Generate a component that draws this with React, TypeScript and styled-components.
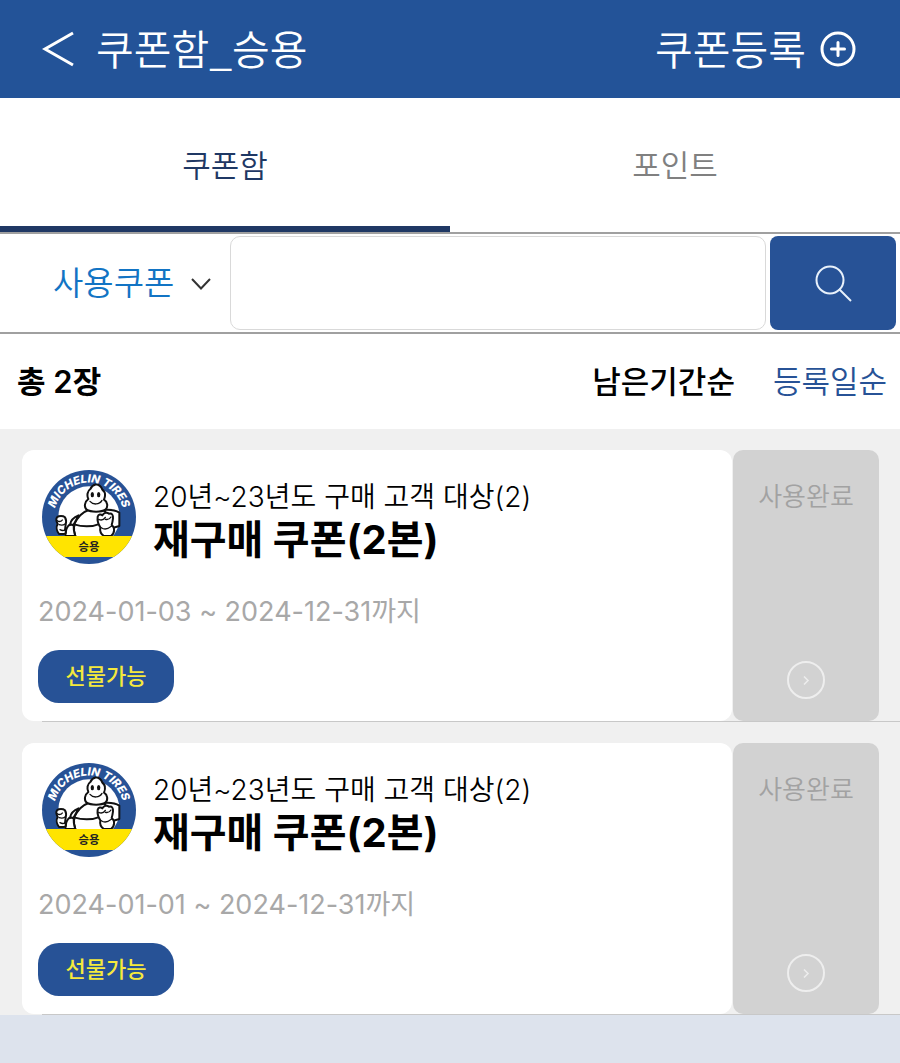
import React from "react";
import styled, { createGlobalStyle } from "styled-components";

const blue = "#275296";

const GlobalStyle = createGlobalStyle`
  *, *::before, *::after { box-sizing: border-box; }
  html, body, #root { min-height: 100vh; }
  body {
    margin: 0;
    background: #dde3ed;
    font-family: Inter, "Noto Sans CJK KR", sans-serif;
    color: #000;
  }
  button, input, select { font: inherit; color: inherit; }
  button { border: 0; padding: 0; background: none; cursor: pointer; }
  h1, h2, p, ul { margin: 0; padding: 0; }
`;

const Page = styled.div`
  background: #fff;
`;

const Header = styled.header`
  display: flex;
  align-items: center;
  justify-content: space-between;
  height: 98px;
  padding: 0 44px 0 42px;
  background: #235398;
  color: #fff;
  font-family: "Noto Sans CJK KR", sans-serif;
  font-size: 41px;
  font-weight: 350;
  line-height: 60px;
`;

const HeaderGroup = styled.div`
  display: flex;
  align-items: center;
  gap: 21px;
`;

const IconButton = styled.button`
  display: flex;
`;

const Title = styled.h1`
  padding-bottom: 4px;
  font: inherit;
`;

const RegisterButton = styled.button`
  display: flex;
  align-items: center;
  gap: 14px;
  span { padding-bottom: 4px; }
`;

const Tabs = styled.div`
  display: grid;
  grid-template-columns: 1fr 1fr;
  height: 136px;
  border-bottom: 2px solid #a0a0a0;
`;

const Tab = styled.button<{ $active?: boolean }>`
  padding-top: 2px;
  border-bottom: 6px solid ${(p) => (p.$active ? "#1f3864" : "transparent")};
  color: ${(p) => (p.$active ? "#1f3864" : "#808080")};
  font-size: 31px;
  font-weight: 350;
`;

const SearchBar = styled.form`
  display: flex;
  gap: 4px;
  height: 100px;
  padding: 2px 4px;
  border-bottom: 2px solid #a0a0a0;
`;

const FilterWrap = styled.div`
  position: relative;
  width: 222px;
  svg {
    position: absolute;
    right: 15px;
    top: 42px;
    pointer-events: none;
  }
`;

const Filter = styled.select`
  appearance: none;
  width: 100%;
  height: 100%;
  padding: 0 48px 0 49px;
  border: 0;
  background: transparent;
  color: #1274c4;
  font-size: 33px;
  font-weight: 350;
`;

const SearchInput = styled.input`
  flex: 1;
  min-width: 0;
  height: 94px;
  padding: 0 20px;
  border: 1px solid #d9d9d9;
  border-radius: 10px;
  background: #fff;
  font-size: 31px;
`;

const SearchButton = styled.button`
  display: flex;
  align-items: center;
  justify-content: center;
  width: 126px;
  height: 94px;
  border-radius: 8px;
  background: ${blue};
`;

const Summary = styled.div`
  display: flex;
  align-items: center;
  justify-content: space-between;
  height: 95px;
  padding: 0 13px 4px 17px;
  font-size: 31px;
`;

const Count = styled.p`
  font-weight: 600;
`;

const Sorts = styled.div`
  display: flex;
  gap: 38px;
`;

const SortButton = styled.button<{ $active?: boolean }>`
  color: ${(p) => (p.$active ? "#000" : blue)};
  font-weight: ${(p) => (p.$active ? 500 : 350)};
`;

const CouponList = styled.ul`
  list-style: none;
  background: #f0f0f0;
`;

const CouponItem = styled.li`
  padding-top: 21px;
`;

const Coupon = styled.article`
  display: flex;
  gap: 1px;
  height: 271px;
  padding: 0 21px 0 22px;
`;

const Divider = styled.div`
  height: 1px;
  margin-left: 42px;
  background: #c8c8c8;
`;

const CouponBody = styled.div`
  flex: 1;
  padding: 20px 16px 18px;
  border-radius: 12px;
  background: #fff;
`;

const CouponHead = styled.div`
  display: flex;
  gap: 17px;
  height: 96px;
  padding-left: 4px;
`;

const CouponText = styled.div`
  padding-top: 8px;
`;

const Target = styled.p`
  font-size: 28px;
  font-weight: 350;
  line-height: 38px;
`;

const CouponName = styled.h2`
  font-size: 40px;
  font-weight: 700;
  line-height: 48px;
`;

const Period = styled.p`
  margin-top: 26px;
  color: #a8a8a8;
  font-size: 27px;
  line-height: 40px;
`;

const GiftButton = styled.button`
  width: 136px;
  height: 53px;
  margin-top: 18px;
  padding-bottom: 6px;
  border-radius: 21px;
  background: ${blue};
  color: #f5e93c;
  font-size: 22px;
  font-weight: 500;
`;

const Status = styled.div`
  display: flex;
  flex-direction: column;
  align-items: center;
  justify-content: space-between;
  width: 146px;
  padding: 28px 0 22px;
  border-radius: 10px;
  background: #d2d2d2;
  color: #a2a2a2;
  font-size: 26px;
  font-weight: 350;
  line-height: 38px;
`;

function Emblem({ id }: { id: string }) {
  return (
    <svg width="94" height="94" viewBox="36 30 282 282" role="img" aria-label="MICHELIN TIRES 승용">
      <defs>
        <clipPath id={`${id}-disc`}>
          <circle cx="177" cy="171" r="141" />
        </clipPath>
        <path id={`${id}-arc`} d="M76 201a105 105 0 1 1 202 0" />
      </defs>
      <g clipPath={`url(#${id}-disc)`}>
        <path fill={blue} d="M36 30h282v282H36z" />
        <circle cx="177" cy="171" r="92" fill="#fff" />
        <g fill="#fff" stroke="#111" strokeWidth="6" strokeLinejoin="round" strokeLinecap="round">
          <path d="M218 150c20-2 38 0 50 8v40l-20 6z" />
          <path d="M137 232c-5-14-6-28-5-38 10-22 26-38 44-44h44c12 6 14 30 12 50v32z" />
          <path d="M146 166c-16 6-24 16-26 28-10 4-13 16-14 34h30c-5-12-6-22-4-36z" />
          <path d="M132 193c26 8 56 8 82-3M118 195c6-2 12-1 15 4" fill="none" />
          <path d="M198 73c-7 2-14 7-17 14-9 6-11 20-6 30-11 8-14 24-5 32 12 8 45 8 56 0 9-8 7-24-4-30 5-12 3-24-5-30-3-8-10-15-19-16z" />
          <path d="M222 228c-10-6-13-16-11-26-7-10-9-24-8-32 2-8 10-8 14-4 4-8 14-10 20-5 9-2 13 4 12 14-1 8-2 14-4 20 10 8 10 24-2 33z" />
          <path d="M206 178c8 4 16 0 20-6M226 178c8 2 14-2 17-7M214 203c8 6 20 4 30-4" strokeWidth="4" fill="none" />
          <path d="M87 222c-7-9-9-22-4-30-4-8-6-15-2-20 6-5 18-5 24 0 4 6 4 14 2 22l-2 16c6 6 2 12-4 12z" />
          <path d="M82 182c5 4 12 3 15-2M87 194c7 2 14 1 18-2M90 209c5 3 10 3 15 1" strokeWidth="4" fill="none" />
        </g>
        <g fill="#111">
          <ellipse cx="187" cy="104" rx="5" ry="8" />
          <ellipse cx="206" cy="104" rx="5" ry="8" />
        </g>
        <path d="M180 124c9 11 28 11 36-3" fill="none" stroke="#111" strokeWidth="4" strokeLinecap="round" />
        <path fill="#ffe400" d="M36 228h282v63H36z" />
      </g>
      <text fill="#fff" fontFamily="Inter, sans-serif" fontSize="34" fontWeight="800" fontStyle="italic" textAnchor="middle">
        <textPath href={`#${id}-arc`} startOffset="50%">MICHELIN TIRES</textPath>
      </text>
      <text x="177" y="272" fill="#222" fontFamily="'Noto Sans CJK KR', sans-serif" fontSize="34" fontWeight="700" textAnchor="middle">
        승용
      </text>
    </svg>
  );
}

const coupons = [
  { id: "coupon1", target: "20년~23년도 구매 고객 대상(2)", name: "재구매 쿠폰(2본)", period: "2024-01-03 ~ 2024-12-31까지" },
  { id: "coupon2", target: "20년~23년도 구매 고객 대상(2)", name: "재구매 쿠폰(2본)", period: "2024-01-01 ~ 2024-12-31까지" },
];

export default function App() {
  return (
    <>
      <GlobalStyle />
      <Page>
        <Header>
          <HeaderGroup>
            <IconButton type="button" aria-label="뒤로">
              <svg width="33" height="38" viewBox="0 0 33 38" fill="none" stroke="#fff" strokeWidth="3">
                <path d="M31 3 3 19l28 16" />
              </svg>
            </IconButton>
            <Title>쿠폰함_승용</Title>
          </HeaderGroup>
          <RegisterButton type="button">
            <span>쿠폰등록</span>
            <svg width="36" height="36" viewBox="0 0 36 36" fill="none" stroke="#fff" strokeWidth="3" strokeLinecap="round">
              <circle cx="18" cy="18" r="16" />
              <path d="M18 11.500v13M11.500 18h13" />
            </svg>
          </RegisterButton>
        </Header>

        <Tabs role="tablist">
          <Tab type="button" role="tab" aria-selected="true" $active>쿠폰함</Tab>
          <Tab type="button" role="tab" aria-selected="false">포인트</Tab>
        </Tabs>

        <SearchBar onSubmit={(e) => e.preventDefault()}>
          <FilterWrap>
            <Filter aria-label="쿠폰 종류" defaultValue="used">
              <option value="used">사용쿠폰</option>
            </Filter>
            <svg width="20" height="13" viewBox="0 0 20 13" fill="none" stroke="#333" strokeWidth="2">
              <path d="m1 1 9 9.500L19 1" />
            </svg>
          </FilterWrap>
          <SearchInput type="search" aria-label="쿠폰 검색" />
          <SearchButton type="submit" aria-label="검색">
            <svg width="37" height="37" viewBox="0 0 37 37" fill="none" stroke="#e8f1fb" strokeWidth="2">
              <circle cx="15" cy="15" r="13.500" />
              <path d="m24 24 12 12" />
            </svg>
          </SearchButton>
        </SearchBar>

        <Summary>
          <Count>총 2장</Count>
          <Sorts>
            <SortButton type="button" $active>남은기간순</SortButton>
            <SortButton type="button">등록일순</SortButton>
          </Sorts>
        </Summary>

        <CouponList>
          {coupons.map((c) => (
            <CouponItem key={c.id}>
              <Coupon>
                <CouponBody>
                  <CouponHead>
                    <Emblem id={c.id} />
                    <CouponText>
                      <Target>{c.target}</Target>
                      <CouponName>{c.name}</CouponName>
                    </CouponText>
                  </CouponHead>
                  <Period>{c.period}</Period>
                  <GiftButton type="button">선물가능</GiftButton>
                </CouponBody>
                <Status>
                  사용완료
                  <IconButton type="button" aria-label="상세 보기">
                    <svg width="38" height="38" viewBox="0 0 38 38" fill="none" stroke="#eee">
                      <circle cx="19" cy="19" r="18" strokeWidth="2" />
                      <path d="m17 15.500 4 4-4 4" strokeWidth="1.500" />
                    </svg>
                  </IconButton>
                </Status>
              </Coupon>
              <Divider />
            </CouponItem>
          ))}
        </CouponList>
      </Page>
    </>
  );
}
